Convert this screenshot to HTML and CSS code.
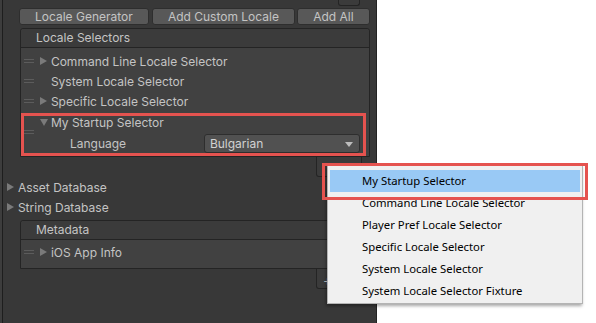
FILE: index.html
```html
<!DOCTYPE html>
<html lang="en">
<head>
    <meta charset="UTF-8">
    <meta name="viewport" content="width=device-width, initial-scale=1.0">
    <title>Localization Settings</title>
    <link rel="stylesheet" href="styles.css">
</head>
<body>

    <div class="editor">
        <div class="edge"></div>
        <div class="inspector">
            <div class="stub-footer"></div>

            <div class="toolbar">
                <button class="btn btn-generator">Locale Generator</button>
                <button class="btn btn-custom">Add Custom Locale</button>
                <button class="btn btn-all">Add All</button>
            </div>

            <div class="rlist">
                <div class="rlist-header">Locale Selectors</div>
                <div class="rlist-body selectors">
                    <div class="row"><span class="handle"></span><span class="arrow"></span>Command Line Locale Selector</div>
                    <div class="row"><span class="handle"></span><span class="arrow none"></span>System Locale Selector</div>
                    <div class="row"><span class="handle"></span><span class="arrow"></span>Specific Locale Selector</div>
                    <div class="selected">
                        <span class="handle mid"></span>
                        <div class="row first"><span class="arrow open"></span>My Startup Selector</div>
                        <div class="row field">
                            <span class="field-label">Language</span>
                            <div class="dropdown">Bulgarian<span class="drop-arrow"></span></div>
                        </div>
                    </div>
                </div>
            </div>
            <div class="rlist-footer"></div>

            <div class="foldout"><span class="arrow"></span>Asset Database</div>
            <div class="foldout"><span class="arrow"></span>String Database</div>

            <div class="rlist metadata">
                <div class="rlist-header">Metadata</div>
                <div class="rlist-body">
                    <div class="row"><span class="handle"></span><span class="arrow"></span>iOS App Info</div>
                </div>
            </div>
            <div class="rlist-footer"><span class="plus">+</span></div>
        </div>
    </div>

    <div class="popup">
        <div class="item active">My Startup Selector</div>
        <div class="item">Command Line Locale Selector</div>
        <div class="item">Player Pref Locale Selector</div>
        <div class="item">Specific Locale Selector</div>
        <div class="item">System Locale Selector</div>
        <div class="item">System Locale Selector Fixture</div>
    </div>
    <div class="callout"></div>

</body>
</html>
```

FILE: styles.css
```css
body {
    margin: 0;
    background: #fff;
    font-family: Inter, "Noto Sans", sans-serif;
    font-size: 12px;
    color: #c4c4c4;
    overflow: hidden;
}
.editor {
    display: flex;
    width: 377px;
    height: 323px;
}
.edge {
    width: 2px;
    background: #3d3d3d;
    border-right: 1px solid #1e1e1e;
}
.inspector {
    width: 367px;
    padding: 0 6px 0 16px;
    background: #383838;
    border-right: 1px solid #232323;
}
.stub-footer {
    margin-left: 319px;
    width: 20px;
    height: 5px;
    border: 1px solid #242424;
    border-top: none;
    border-radius: 0 0 3px 3px;
    background: #3b3b3b;
}
.toolbar {
    display: flex;
    margin-top: 2px;
    height: 17px;
}
.btn {
    height: 17px;
    padding: 0;
    font: inherit;
    color: #c4c4c4;
    background: #585858;
    border: 1px solid #2e2e2e;
    border-radius: 3px;
    line-height: 15px;
}
.btn-generator { width: 130px; }
.btn-custom { width: 143px; margin-left: 3px; }
.btn-all { width: 73px; margin-left: 2px; }

/* reorderable lists */
.rlist {
    margin: 3px 0 0 1px;
    border: 1px solid #242424;
    border-radius: 3px 3px 0 0;
    background: #414141;
}
.rlist-header {
    height: 18px;
    line-height: 18px;
    padding-left: 15px;
    background: #3b3b3b;
    border-bottom: 1px solid #242424;
    border-radius: 3px 3px 0 0;
}
.rlist-body.selectors {
    padding: 3px 0 0;
    height: 105px;
}
.row {
    position: relative;
    display: flex;
    align-items: center;
    height: 20px;
}
.handle {
    width: 10px;
    height: 2px;
    margin: 0 6px 0 3px;
    border-top: 1px solid #5c5c5c;
    border-bottom: 1px solid #5c5c5c;
}
.arrow {
    width: 0;
    height: 0;
    margin-right: 4px;
    border-left: 7px solid #7a7a7a;
    border-top: 4px solid transparent;
    border-bottom: 4px solid transparent;
}
.arrow.none {
    border-left-color: transparent;
}
.arrow.open {
    margin-right: 3px;
    border-left: 4.5px solid transparent;
    border-right: 4.5px solid transparent;
    border-top: 7px solid #7a7a7a;
    border-bottom: none;
}
.selected {
    position: relative;
    margin: 2px 3px 0 0;
    padding-left: 19px;
    height: 43px;
    box-sizing: border-box;
    box-shadow: inset 0 0 0 3px #e5534f;
}
.handle.mid {
    position: absolute;
    left: 0;
    top: 17px;
}
.row.first {
    height: 19px;
}
.row.field {
    margin-top: 1px;
}
.field-label {
    width: 134px;
    padding-left: 30px;
}
.dropdown {
    position: relative;
    width: 149px;
    height: 17px;
    line-height: 17px;
    padding-left: 5px;
    margin-top: 1px;
    color: #d2d2d2;
    background: #515151;
    border: 1px solid #2e2e2e;
    border-radius: 3px;
}
.drop-arrow {
    position: absolute;
    right: 6px;
    top: 7px;
    border-left: 4px solid transparent;
    border-right: 4px solid transparent;
    border-top: 5px solid #bdbdbd;
}

.rlist-footer {
    position: relative;
    margin-left: 297px;
    width: 44px;
    height: 19px;
    border: 1px solid #242424;
    border-top: none;
    border-radius: 0 0 3px 3px;
    background: #3b3b3b;
}
.plus {
    position: absolute;
    left: 6px;
    top: 2px;
    font-size: 14px;
    color: #c4c4c4;
}

.foldout {
    display: flex;
    align-items: center;
    height: 20px;
    margin-left: -12px;
}

.metadata {
    margin-top: 3px;
}
.metadata .rlist-body {
    height: 28px;
    padding-top: 2px;
    box-sizing: border-box;
}

/* context menu */
.popup {
    position: absolute;
    left: 327px;
    top: 165px;
    width: 250px;
    padding: 4px 2px 1px;
    background: #f0f0f0;
    border: 1px solid #b4b4b4;
    box-shadow: -1px 2px 3px rgba(0, 0, 0, 0.35);
    font-family: "Noto Sans", sans-serif;
    font-size: 11.3px;
    color: #000;
}
.item {
    height: 22px;
    line-height: 22px;
    padding-left: 32px;
}
.item.active {
    background: #99c9f5;
}
.callout {
    position: absolute;
    left: 322px;
    top: 163px;
    width: 266px;
    height: 37px;
    box-sizing: border-box;
    border: 3px solid #e5534f;
}
```
